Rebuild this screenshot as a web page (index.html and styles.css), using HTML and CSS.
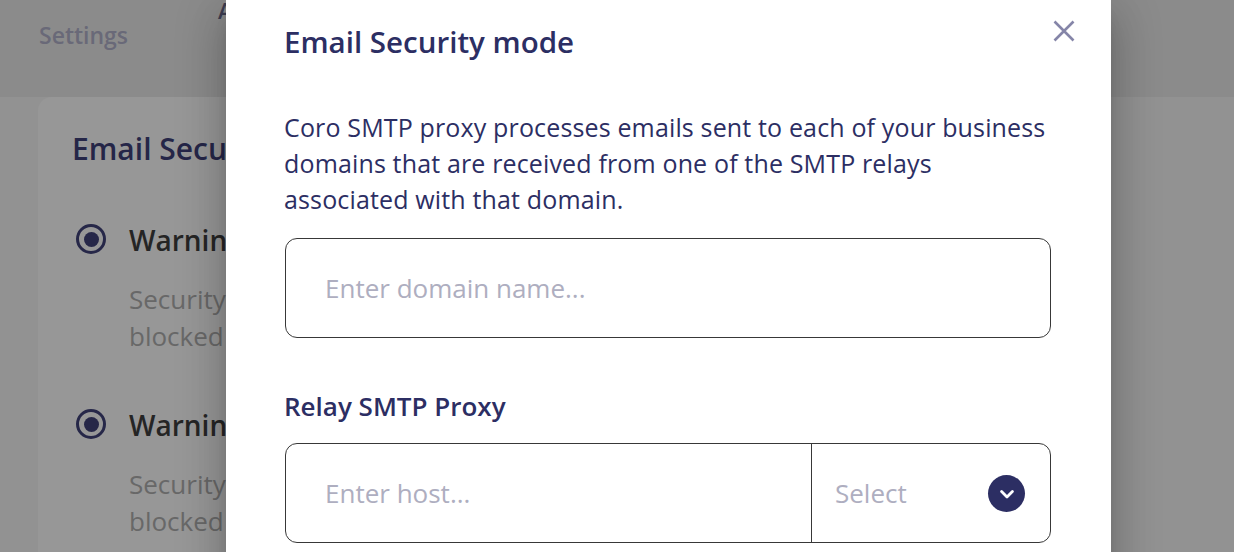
FILE: index.html
```html
<!DOCTYPE html>
<html lang="en">
<head>
<meta charset="utf-8">
<title>Email Security mode</title>
<link rel="stylesheet" href="styles.css">
</head>
<body>
<div class="page">
  <header class="topbar">
    <span class="crumb">Settings</span>
    <span class="tab">Accounts</span>
  </header>
  <main class="main">
    <section class="card">
      <h2 class="card-title">Email Security mode</h2>
      <div class="option">
        <span class="radio"></span>
        <div class="option-body">
          <div class="option-title">Warning mode</div>
          <div class="option-text">Security warnings are added to suspicious emails, malicious emails are<br>blocked and quarantined.</div>
        </div>
      </div>
      <div class="option">
        <span class="radio"></span>
        <div class="option-body">
          <div class="option-title">Warning and block mode</div>
          <div class="option-text">Security warnings are added to suspicious emails, malicious emails are<br>blocked and quarantined.</div>
        </div>
      </div>
    </section>
  </main>
</div>

<div class="overlay"></div>

<div class="dialog" role="dialog">
  <div class="dialog-head">
    <h1 class="dialog-title">Email Security mode</h1>
    <button class="close" aria-label="Close">
      <svg width="22" height="22" viewBox="0 0 22 22"><path d="M1.5 1.5 L20.5 20.5 M20.5 1.5 L1.5 20.5" stroke="currentColor" stroke-width="2.6" stroke-linecap="butt" fill="none"/></svg>
    </button>
  </div>
  <p class="dialog-text">Coro SMTP proxy processes emails sent to each of your business domains that are received from one of the SMTP relays<br>associated with that domain.</p>
  <div class="field">
    <input class="field-input" type="text" placeholder="Enter domain name...">
  </div>
  <div class="label">Relay SMTP Proxy</div>
  <div class="field split">
    <input class="field-input" type="text" placeholder="Enter host...">
    <div class="select">
      <span class="select-text">Select</span>
      <span class="chev">
        <svg width="14" height="9" viewBox="0 0 14 9"><path d="M1.6 1.6 L7 7 L12.4 1.6" stroke="#fff" stroke-width="2.8" fill="none" stroke-linecap="round" stroke-linejoin="round"/></svg>
      </span>
    </div>
  </div>
</div>
</body>
</html>
```

FILE: styles.css
```css
* { box-sizing: border-box; }
html, body {
  margin: 0;
  padding: 0;
  width: 1234px;
  height: 552px;
  overflow: hidden;
}
body {
  font-family: "Open Sans", "Noto Sans", "Liberation Sans", sans-serif;
  background: #f4f4f4;
  position: relative;
}

/* background page */
.page {
  display: flex;
  flex-direction: column;
  height: 552px;
}
.topbar {
  height: 97px;
  background: #e6e6e6;
  display: flex;
  align-items: flex-start;
  padding-left: 39px;
}
.crumb {
  margin-top: 20px;
  font-size: 23px;
  font-weight: 600;
  color: #a6a6c2;
  line-height: 30px;
}
.tab {
  margin-left: 90px;
  margin-top: -5px;
  font-size: 22px;
  font-weight: 600;
  color: #55557a;
  line-height: 30px;
}
.main {
  flex: 1;
  background: #f2f2f2;
  padding-left: 38px;
}
.card {
  background: #fbfbfb;
  border-radius: 14px 14px 0 0;
  height: 100%;
  width: 900px;
  padding: 32px 0 0 34px;
}
.card-title {
  margin: 0;
  font-size: 30px;
  font-weight: 600;
  line-height: 40px;
  color: #2a2c6a;
}
.option {
  display: flex;
  align-items: flex-start;
  margin-top: 56px;
}
.option + .option { margin-top: 55px; }
.radio {
  width: 30px;
  height: 30px;
  border: 3px solid #2b2d6a;
  border-radius: 50%;
  margin: -1px 0 0 4px;
  display: flex;
  align-items: center;
  justify-content: center;
  flex: none;
}
.radio::after {
  content: "";
  width: 15px;
  height: 15px;
  border-radius: 50%;
  background: #2b2d6a;
}
.option-body { margin-left: 23px; }
.option-title {
  font-size: 28px;
  font-weight: 600;
  color: #2a2a2a;
  line-height: 30px;
}
.option-text {
  margin-top: 26px;
  font-size: 26px;
  line-height: 37px;
  color: #a5a5a5;
  white-space: nowrap;
}

.overlay {
  position: absolute;
  inset: 0;
  background: rgba(33, 33, 33, 0.46);
}

/* dialog */
.dialog {
  position: absolute;
  left: 226px;
  top: 0;
  width: 885px;
  height: 600px;
  background: #fff;
  padding: 26px 60px 0 58px;
  box-shadow: 0 11px 15px -7px rgba(0,0,0,.2), 0 24px 38px 3px rgba(0,0,0,.14), 0 9px 46px 8px rgba(0,0,0,.12);
  color: #2c2e63;
}
.dialog-head {
  display: flex;
  justify-content: space-between;
  align-items: flex-start;
}
.dialog-title {
  margin: 0;
  font-size: 29.5px;
  line-height: 32px;
  font-weight: 600;
  color: #2c2e63;
}
.close {
  border: 0;
  background: none;
  padding: 0;
  margin: -6px -24px 0 0;
  width: 22px;
  height: 22px;
  color: #8585a8;
  display: block;
}
.close svg { display: block; }
.dialog-text {
  margin: 51px 0 0;
  font-size: 25px;
  letter-spacing: 0.15px;
  line-height: 36px;
  color: #2c2e63;
}
.field {
  margin-top: 21px;
  margin-left: 1px;
  height: 100px;
  border: 1.5px solid #383838;
  border-radius: 12px;
  display: flex;
}
.field-input {
  flex: 1;
  min-width: 0;
  border: 0;
  background: transparent;
  outline: none;
  padding: 0 0 0 39px;
  font-family: inherit;
  font-size: 26px;
  color: #2c2e63;
  border-radius: 12px;
}
.field-input::placeholder { color: #aeaec0; }
.label {
  margin-top: 52px;
  font-size: 26px;
  line-height: 32px;
  font-weight: 600;
  color: #2c2e63;
}
.field.split { margin-top: 21px; }
.split .field-input { flex: none; width: 525px; }
.select {
  flex: 1;
  border-left: 1.5px solid #383838;
  display: flex;
  align-items: center;
  justify-content: space-between;
  padding: 0 25px 0 23px;
}
.select-text {
  font-size: 26px;
  color: #aeaec0;
}
.chev {
  width: 37px;
  height: 37px;
  border-radius: 50%;
  background: #2c2e63;
  display: flex;
  align-items: center;
  justify-content: center;
  padding-top: 2px;
}
.chev svg { display: block; }
```
